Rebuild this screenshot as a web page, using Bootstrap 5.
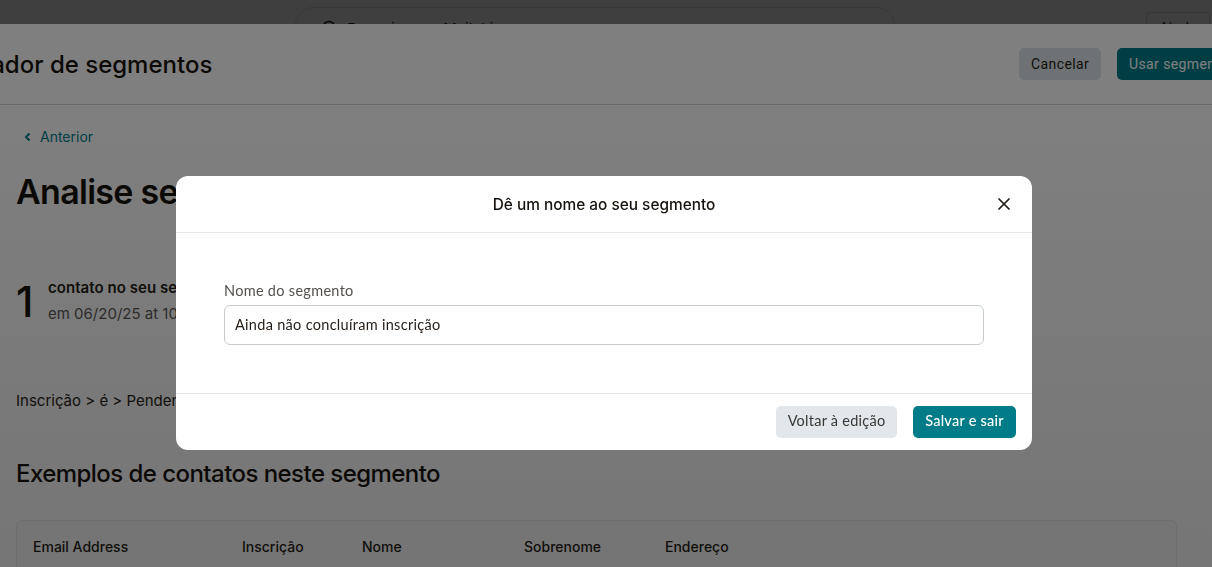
<!doctype html>
<html lang="pt">
<head>
<meta charset="utf-8">
<link href="https://cdn.jsdelivr.net/npm/bootstrap@5.3.0/dist/css/bootstrap.min.css" rel="stylesheet">
<style>
html,body{height:100%;overflow:hidden;}
body{background:#fff;color:#241c15;font-family:"Inter","Liberation Sans",sans-serif;}
.topstrip{height:24px;background:#fff;overflow:hidden;}
.searchbox{margin-left:295px;width:600px;height:40px;border:1px solid #e2e2e2;border-radius:18px;margin-top:7px;padding:12px 0 0 26px;gap:9px;font-size:15px;line-height:18px;color:#111;flex:none;white-space:nowrap;}
.helpbtn{margin-left:251px;width:64px;height:30px;margin-top:12px;border:1px solid #d8d8d8;border-radius:4px;font-size:14px;line-height:17px;text-align:center;padding-top:6px;flex:none;}
.pagehead{height:81px;border-bottom:1px solid #d0d0d0;margin-left:-42px;margin-right:-60px;background:#fff;}
.pagetitle{font-size:24px;font-weight:500;margin:2px 0 0;color:#17120d;white-space:nowrap;}
.headbtn{font-family:"Roboto","Liberation Sans",sans-serif;font-size:14px;height:32px;padding:0 12px;border-radius:5px;border:0;letter-spacing:.4px;white-space:nowrap;}
.btn-cancelar{background:#dfe5e8;color:#241c15;width:82px;}
.btn-usar{background:#007c89;color:#fff;width:155px;text-align:left;}
.contentarea{padding:0 16px;height:calc(100vh - 105px);overflow:hidden;background:linear-gradient(#fff,#ececec);}
.backlink{font-size:14px;color:#007c89;padding:23px 0 0 8px;line-height:17px;gap:9px;}
.analise{font-size:34px;font-weight:600;margin:27px 0 0;line-height:40px;letter-spacing:-.7px;color:#17120d;white-space:nowrap;}
.bignum{font-size:42px;line-height:44px;font-weight:500;width:32px;color:#17120d;}
.statsrow{margin-top:66px;}
.stat1{font-size:15px;font-weight:600;line-height:20px;letter-spacing:.05px;}
.stat2{font-size:15px;color:#5c5956;line-height:22px;margin-top:5px;}
.crit{font-size:15px;margin-top:66px;line-height:20px;}
.subhead{font-size:24px;font-weight:500;margin:48px 0 0;line-height:30px;letter-spacing:-.55px;color:#17120d;}
.samples{margin-top:31px;width:1161px;height:100px;background:#eaeaea;border:1px solid #dcdcdc;border-radius:6px;padding:15px 16px;font-size:14px;font-weight:500;}
.samples span{display:inline-block;}
.c1{width:209px}.c2{width:120px}.c3{width:162px}.c4{width:141px}
.backdrop-own{position:fixed;inset:0;background:rgba(0,0,0,.5);z-index:1050;}
.topshade{position:fixed;left:0;right:0;top:0;height:24px;background:rgba(0,0,0,.5);z-index:1051;}
.modal-own{position:fixed;left:176px;top:176px;width:856px;z-index:1060;background:#fff;border-radius:12px;overflow:hidden;font-family:"Lato","Liberation Sans",sans-serif;}
.mhead{height:57px;border-bottom:1px solid #e6e9ea;position:relative;padding-top:2px;}
.mtitle{font-family:"Inter","Liberation Sans",sans-serif;font-size:15.4px;font-weight:500;margin:0;color:#17120d;}
.xbtn{position:absolute;right:20px;top:20px;width:16px;height:16px;background:none;border:0;padding:0;line-height:0;}
.mbody{height:160px;padding:49px 48px 0;}
.flabel{font-size:14.5px;color:#53504d;line-height:17px;letter-spacing:.3px;margin-bottom:6px;display:block;}
.finput{height:40px;border:1px solid #c5cbce;border-radius:6px;font-size:14.5px;padding:0 10px 2px;color:#241c15;letter-spacing:.3px;font-family:inherit;box-shadow:none;}
.mfoot{height:57px;border-top:1px solid #e6e9ea;padding-right:16px;gap:16px;}
.mbtn{font-size:14.5px;height:32px;padding:0 0 3px;border:0;border-radius:5px;letter-spacing:.25px;font-family:inherit;white-space:nowrap;}
.mbtn-sec{background:#e1e7ea;color:#3a3835;width:121px;}
.mbtn-pri{background:#007c89;color:#fff;font-weight:500;width:103px;}
</style>
</head>
<body>
<div class="topstrip d-flex">
  <div class="searchbox d-flex align-items-start">
    <svg width="16" height="16" viewBox="0 0 16 16"><circle cx="7" cy="7" r="5.5" fill="none" stroke="#111" stroke-width="1.6"/></svg>
    <span>Pesquisar no Mailchimp</span>
  </div>
  <div class="helpbtn">Ajuda</div>
</div>
<div class="pagehead d-flex align-items-center justify-content-between">
  <h1 class="pagetitle">Criador de segmentos</h1>
  <div class="d-flex gap-3">
    <button class="headbtn btn-cancelar">Cancelar</button>
    <button class="headbtn btn-usar">Usar segmento</button>
  </div>
</div>
<main class="contentarea">
  <div class="backlink d-flex align-items-center">
    <svg width="7" height="10" viewBox="0 0 7 10"><path d="M5.5 1.5 2 5l3.5 3.5" fill="none" stroke="#007c89" stroke-width="2"/></svg>
    <span>Anterior</span>
  </div>
  <h2 class="analise">Analise seu segmento</h2>
  <div class="statsrow d-flex align-items-center">
    <div class="bignum">1</div>
    <div>
      <div class="stat1">contato no seu segmento</div>
      <div class="stat2">em 06/20/25 at 10:00 am</div>
    </div>
  </div>
  <div class="crit">Inscrição &gt; é &gt; Pendente</div>
  <h3 class="subhead">Exemplos de contatos neste segmento</h3>
  <div class="samples">
    <span class="c1">Email Address</span><span class="c2">Inscrição</span><span class="c3">Nome</span><span class="c4">Sobrenome</span><span>Endereço</span>
  </div>
</main>
<div class="backdrop-own"></div>
<div class="topshade"></div>
<div class="modal-own" role="dialog">
  <div class="mhead d-flex align-items-center justify-content-center">
    <h5 class="mtitle">Dê um nome ao seu segmento</h5>
    <button class="xbtn" aria-label="Fechar"><svg width="14" height="14" viewBox="0 0 14 14"><path d="M1.5 1.5l11 11M12.5 1.5l-11 11" stroke="#241c15" stroke-width="1.7" fill="none"/></svg></button>
  </div>
  <div class="mbody">
    <label class="flabel">Nome do segmento</label>
    <input class="form-control finput" value="Ainda não concluíram inscrição">
  </div>
  <div class="mfoot d-flex align-items-center justify-content-end">
    <button class="mbtn mbtn-sec">Voltar à edição</button>
    <button class="mbtn mbtn-pri">Salvar e sair</button>
  </div>
</div>
<script src="https://cdn.jsdelivr.net/npm/bootstrap@5.3.0/dist/js/bootstrap.bundle.min.js"></script>
</body>
</html>
